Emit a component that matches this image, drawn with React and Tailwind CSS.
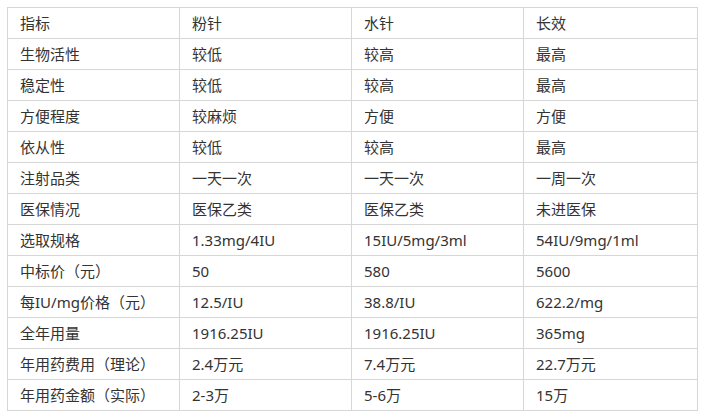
const rows = [
  ["指标", "粉针", "水针", "长效"],
  ["生物活性", "较低", "较高", "最高"],
  ["稳定性", "较低", "较高", "最高"],
  ["方便程度", "较麻烦", "方便", "方便"],
  ["依从性", "较低", "较高", "最高"],
  ["注射品类", "一天一次", "一天一次", "一周一次"],
  ["医保情况", "医保乙类", "医保乙类", "未进医保"],
  ["选取规格", "1.33mg/4IU", "15IU/5mg/3ml", "54IU/9mg/1ml"],
  ["中标价（元）", "50", "580", "5600"],
  ["每IU/mg价格（元）", "12.5/IU", "38.8/IU", "622.2/mg"],
  ["全年用量", "1916.25IU", "1916.25IU", "365mg"],
  ["年用药费用（理论）", "2.4万元", "7.4万元", "22.7万元"],
  ["年用药金额（实际）", "2-3万", "5-6万", "15万"],
];

export default function App() {
  return (
    <div className="h-[417px] w-[704px] bg-white pl-[7px] pt-[7px] font-['Noto_Sans','Noto_Sans_CJK_SC',sans-serif] text-[15px] text-[#333]">
      <table className="w-[690px] table-fixed border-collapse">
        <colgroup>
          <col className="w-[172px]" />
          <col className="w-[172px]" />
          <col className="w-[172px]" />
          <col className="w-[174px]" />
        </colgroup>
        <tbody>
          {rows.map((row, i) => (
            <tr key={i} className="h-[31px]">
              {row.map((cell, j) => (
                <td
                  key={j}
                  className="border border-[#d6d6d6] px-[12px] py-0 align-middle leading-[30px] whitespace-nowrap"
                >
                  {cell}
                </td>
              ))}
            </tr>
          ))}
        </tbody>
      </table>
    </div>
  );
}
